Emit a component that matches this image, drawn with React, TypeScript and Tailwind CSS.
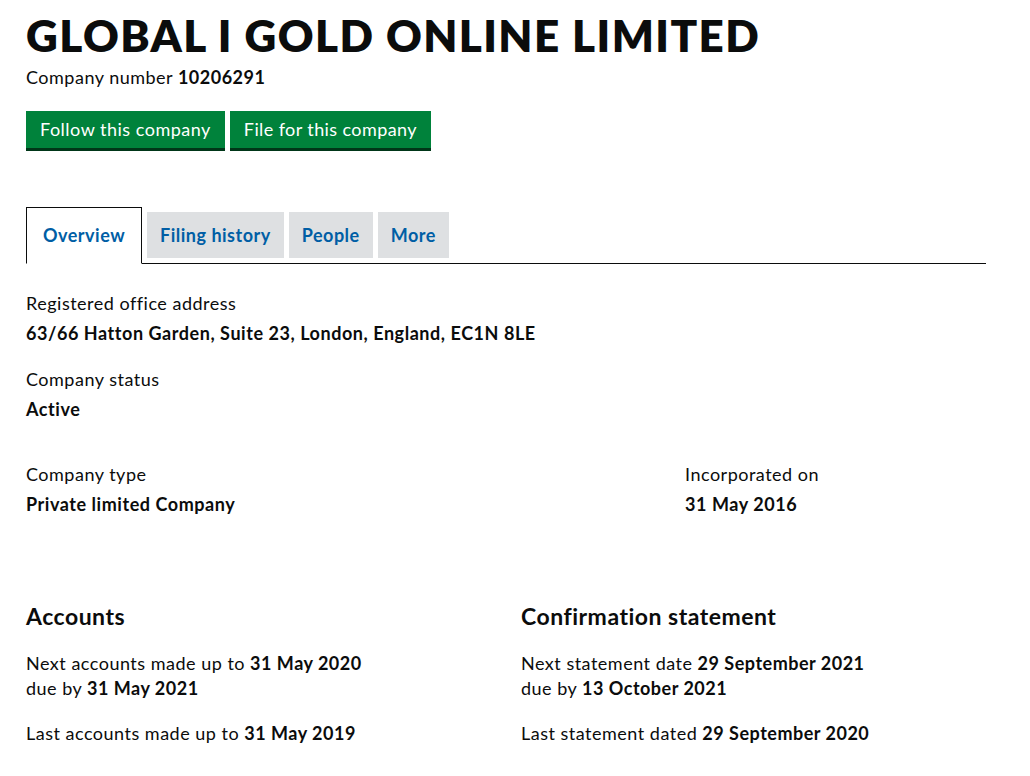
const font = { fontFamily: "Lato, 'Liberation Sans', sans-serif" };

const Field = ({ label, value }: { label: string; value: string }) => (
  <div>
    <p className="text-[18px] leading-[25px] tracking-[0.5px] text-[#0b0c0c]">{label}</p>
    <p className="mt-[5px] text-[18px] font-bold leading-[25px] tracking-[0.55px] text-[#0b0c0c]">{value}</p>
  </div>
);

const tabs = ["Filing history", "People", "More"];

export default function App() {
  return (
    <div className="min-h-screen bg-white px-[26px] text-[#0b0c0c]" style={font}>
      <h1 className="pt-[8px] text-[44px] font-extrabold leading-[54px] tracking-[1.4px]">
        GLOBAL I GOLD ONLINE LIMITED
      </h1>
      <p className="mt-[3px] text-[18px] leading-[25px] tracking-[0.5px]">
        Company number <strong className="font-bold">10206291</strong>
      </p>

      <div className="mt-[21px] flex gap-[5px]">
        <button className="h-[40px] border-b-[3px] border-[#003618] bg-[#00823b] px-[14px] text-[18px] tracking-[0.5px] text-white">
          Follow this company
        </button>
        <button className="h-[40px] border-b-[3px] border-[#003618] bg-[#00823b] px-[14px] text-[18px] tracking-[0.4px] text-white">
          File for this company
        </button>
      </div>

      <div className="mt-[56px] flex w-[960px] items-end border-b border-[#0b0c0c]">
        <div className="-mb-px flex h-[57px] items-center border border-b-white border-[#0b0c0c] bg-white px-[16px] text-[18px] font-bold tracking-[0.5px] text-[#005ea5]">
          Overview
        </div>
        {tabs.map((t) => (
          <div
            key={t}
            className="mb-[5px] ml-[5px] flex h-[46px] items-center bg-[#dee0e2] px-[13px] text-[18px] font-bold tracking-[0.5px] text-[#005ea5]"
          >
            {t}
          </div>
        ))}
      </div>

      <div className="mt-[27px] flex flex-col gap-[21px]">
        <Field label="Registered office address" value="63/66 Hatton Garden, Suite 23, London, England, EC1N 8LE" />
        <Field label="Company status" value="Active" />
      </div>

      <div className="mt-[40px] flex w-[960px]">
        <div className="w-[659px]">
          <Field label="Company type" value="Private limited Company" />
        </div>
        <Field label="Incorporated on" value="31 May 2016" />
      </div>

      <div className="mt-[84px] flex w-[960px] tracking-[0.5px]">
        <div className="w-[495px]">
          <h2 className="text-[23px] font-bold leading-[30px]">Accounts</h2>
          <p className="mt-[20px] text-[18px] leading-[25px]">
            Next accounts made up to <strong>31 May 2020</strong>
            <br />
            due by <strong>31 May 2021</strong>
          </p>
          <p className="mt-[20px] text-[18px] leading-[25px]">
            Last accounts made up to <strong>31 May 2019</strong>
          </p>
        </div>
        <div>
          <h2 className="text-[23px] font-bold leading-[30px]">Confirmation statement</h2>
          <p className="mt-[20px] text-[18px] leading-[25px]">
            Next statement date <strong>29 September 2021</strong>
            <br />
            due by <strong>13 October 2021</strong>
          </p>
          <p className="mt-[20px] text-[18px] leading-[25px]">
            Last statement dated <strong>29 September 2020</strong>
          </p>
        </div>
      </div>
    </div>
  );
}
